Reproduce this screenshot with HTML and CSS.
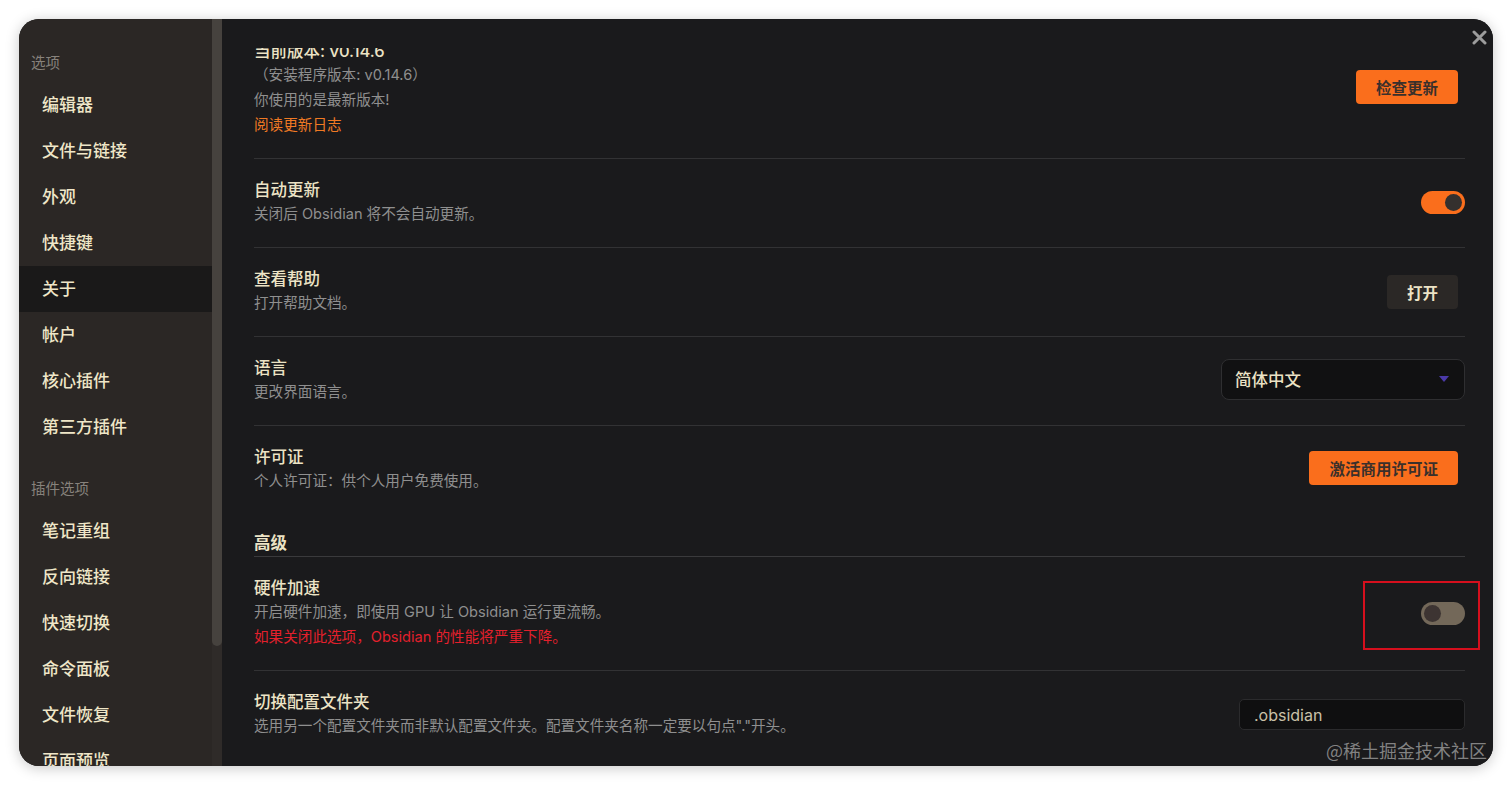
FILE: index.html
```html
<!DOCTYPE html>
<html lang="zh-CN">
<head>
<meta charset="utf-8">
<title>设置 - 关于</title>
<link rel="stylesheet" href="styles.css">
</head>
<body>
<div class="window">
  <aside class="sidebar">
    <nav class="nav">
      <div class="nav-header">选项</div>
      <div class="nav-item">编辑器</div>
      <div class="nav-item">文件与链接</div>
      <div class="nav-item">外观</div>
      <div class="nav-item">快捷键</div>
      <div class="nav-item active">关于</div>
      <div class="nav-item">帐户</div>
      <div class="nav-item">核心插件</div>
      <div class="nav-item">第三方插件</div>
      <div class="nav-header gap">插件选项</div>
      <div class="nav-item">笔记重组</div>
      <div class="nav-item">反向链接</div>
      <div class="nav-item">快速切换</div>
      <div class="nav-item">命令面板</div>
      <div class="nav-item">文件恢复</div>
      <div class="nav-item">页面预览</div>
    </nav>
    <div class="scrollbar"><div class="thumb"></div></div>
  </aside>
  <main class="main">
    <button class="close" aria-label="关闭">
      <svg width="15" height="15" viewBox="0 0 15 15"><path d="M2 2 L13 13 M13 2 L2 13" stroke="#9c9c9c" stroke-width="3" stroke-linecap="round"/></svg>
    </button>
    <div class="scroll">
      <div class="content">
        <div class="row first">
          <div class="info">
            <div class="title">当前版本: v0.14.6</div>
            <div class="desc">（安装程序版本: v0.14.6）</div>
            <div class="desc">你使用的是最新版本!</div>
            <div class="desc link">阅读更新日志</div>
          </div>
          <div class="control"><button class="btn cta up">检查更新</button></div>
        </div>
        <div class="row">
          <div class="info">
            <div class="title">自动更新</div>
            <div class="desc">关闭后 Obsidian 将不会自动更新。</div>
          </div>
          <div class="control"><div class="toggle on"><span class="knob"></span></div></div>
        </div>
        <div class="row">
          <div class="info">
            <div class="title">查看帮助</div>
            <div class="desc">打开帮助文档。</div>
          </div>
          <div class="control"><button class="btn">打开</button></div>
        </div>
        <div class="row">
          <div class="info">
            <div class="title">语言</div>
            <div class="desc">更改界面语言。</div>
          </div>
          <div class="control">
            <div class="select">
              <span>简体中文</span>
              <svg class="caret" width="10" height="6" viewBox="0 0 10 6"><path d="M0 0 L10 0 L5 6 Z" fill="#4b3aa8"/></svg>
            </div>
          </div>
        </div>
        <div class="row">
          <div class="info">
            <div class="title">许可证</div>
            <div class="desc">个人许可证：供个人用户免费使用。</div>
          </div>
          <div class="control"><button class="btn cta up">激活商用许可证</button></div>
        </div>
        <div class="heading">高级</div>
        <div class="row after-heading">
          <div class="info">
            <div class="title">硬件加速</div>
            <div class="desc">开启硬件加速，即使用 GPU 让 Obsidian 运行更流畅。</div>
            <div class="desc warn">如果关闭此选项，Obsidian 的性能将严重下降。</div>
          </div>
          <div class="control">
            <div class="toggle off"><span class="knob"></span><span class="mark"></span></div>
          </div>
        </div>
        <div class="row">
          <div class="info">
            <div class="title">切换配置文件夹</div>
            <div class="desc">选用另一个配置文件夹而非默认配置文件夹。配置文件夹名称一定要以句点"."开头。</div>
          </div>
          <div class="control"><div class="input">.obsidian</div></div>
        </div>
      </div>
    </div>
  </main>
</div>
<div class="watermark">@稀土掘金技术社区</div>
</body>
</html>
```

FILE: styles.css
```css
* { box-sizing: border-box; }

html, body {
  margin: 0;
  padding: 0;
  background: #ffffff;
  width: 1512px;
  height: 785px;
  overflow: hidden;
  font-family: Inter, "Noto Sans CJK SC", "Noto Sans", sans-serif;
}

.window {
  margin: 19px;
  width: 1474px;
  height: 747px;
  border-radius: 20px;
  overflow: hidden;
  display: flex;
  box-shadow: 0 2px 14px rgba(0, 0, 0, 0.22);
  background: #1a1a1c;
}

/* Sidebar */
.sidebar {
  width: 203px;
  flex: none;
  display: flex;
  background: #2b2725;
}

.nav {
  flex: 1;
  padding-top: 33px;
  overflow: hidden;
}

.nav-header {
  padding-left: 12px;
  height: 22px;
  line-height: 22px;
  margin-bottom: 8px;
  font-size: 14.5px;
  color: #87827c;
}

.nav-header.gap { margin-top: 28px; }

.nav-item {
  height: 46px;
  line-height: 46px;
  padding-left: 23px;
  font-size: 17px;
  font-weight: 500;
  color: #efe6c8;
}

.nav-item.active { background: #1a1919; }

.scrollbar {
  width: 10px;
  flex: none;
  background: #2f2b29;
}

.thumb {
  height: 627px;
  background: #46423e;
  border-radius: 0 0 5px 5px;
}

/* Main */
.main {
  flex: 1;
  position: relative;
  padding: 29px 28px 0 32px;
  display: flex;
  flex-direction: column;
  background: #1a1a1c;
}

.close {
  position: absolute;
  top: 10px;
  right: 5px;
  width: 17px;
  height: 17px;
  padding: 0;
  border: none;
  background: none;
  display: flex;
  align-items: center;
  justify-content: center;
}

.scroll {
  flex: 1;
  overflow-x: visible;
  overflow-y: clip;
}

.content { margin-top: -28px; }

.row {
  display: flex;
  align-items: center;
  border-top: 1px solid #323234;
  padding: 19px 0 20px;
}

.row.first { border-top: none; }
.row.after-heading { border-top: 1px solid #3a3a3c; }

.info { flex: 1; }

.title {
  font-size: 16.5px;
  line-height: 24px;
  font-weight: 500;
  color: #ece3c5;
}

.desc {
  font-size: 14.6px;
  line-height: 25px;
  color: #8f8f8f;
}

.desc.link { color: #f07a24; }
.desc.warn { color: #e3202c; }

.control {
  flex: none;
  display: flex;
  align-items: center;
  position: relative;
}

.btn {
  height: 34px;
  padding: 0 20px;
  margin-right: 7px;
  border: none;
  border-radius: 4px;
  font-family: inherit;
  font-size: 15.5px;
  font-weight: 700;
  background: #2b2826;
  color: #ece3c5;
}

.btn.up { margin-top: -3px; }

.btn.cta {
  background: #fa6e1c;
  color: #3a302b;
}

.toggle {
  width: 44px;
  height: 23px;
  border-radius: 12px;
  position: relative;
  display: flex;
  align-items: center;
  padding: 0 3px;
}

.toggle .knob {
  width: 17px;
  height: 17px;
  border-radius: 50%;
}

.toggle.on {
  background: #fa6e1c;
  justify-content: flex-end;
}
.toggle.on .knob { background: #34302e; }

.toggle.off {
  background: #736859;
  justify-content: flex-start;
}
.toggle.off .knob { background: #3d3432; }

.toggle .mark {
  position: absolute;
  left: -58px;
  top: -21px;
  width: 117px;
  height: 69px;
  border: 2px solid #d50f1d;
}

.select {
  width: 244px;
  height: 41px;
  border: 1px solid #2f2f31;
  border-radius: 8px;
  background: #111112;
  display: flex;
  align-items: center;
  justify-content: space-between;
  padding: 0 15px 0 13px;
  font-size: 16.5px;
  font-weight: 500;
  color: #ece3c5;
  margin-top: -3px;
}

.input {
  width: 226px;
  height: 31px;
  border: 1px solid #2b2b2d;
  border-radius: 5px;
  background: #0f0f10;
  padding: 0 14px;
  display: flex;
  align-items: center;
  font-size: 16px;
  color: #c9c0a8;
}

.heading {
  padding: 17px 0 1px;
  font-size: 16.5px;
  line-height: 24px;
  font-weight: 700;
  color: #ece3c5;
}

.watermark {
  position: absolute;
  right: 25px;
  top: 738px;
  font-family: "Noto Sans CJK SC", sans-serif;
  font-size: 18px;
  line-height: 24px;
  color: rgba(150, 150, 150, 0.85);
}
```
